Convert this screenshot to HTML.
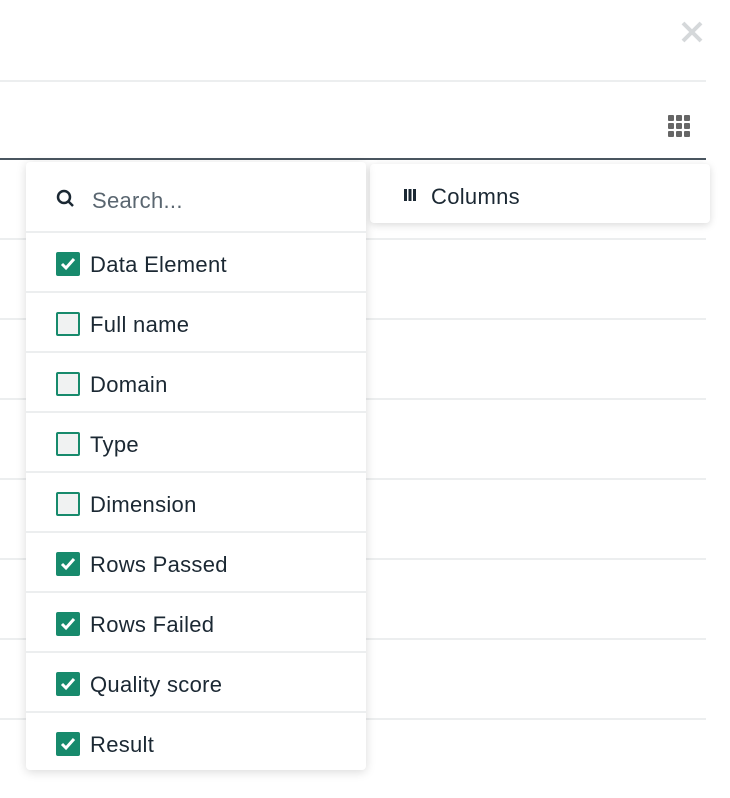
<!DOCTYPE html>
<html><head><style>
body{margin:0;width:730px;height:798px;background:#fff;font-family:"Liberation Sans",sans-serif;position:relative;overflow:hidden;color:#1b2833}
.l{position:absolute;left:0;width:706px;height:2px;background:#eceeef}
.menu{position:absolute;left:26px;top:162px;width:340px;height:608px;background:#fff;border-radius:4px;box-shadow:0 2px 10px rgba(0,0,0,.15)}
.row{height:58px;border-top:2px solid #eceeef;display:flex;align-items:center;padding-left:30px;font-size:22px;letter-spacing:0.3px}
.row .t{position:relative;top:3px}
.cb{width:24px;height:24px;box-sizing:border-box;border-radius:2px;margin-right:10px;display:flex;align-items:center;justify-content:center;position:relative;top:2px}
.on{background:#178a6c}
.off{border:2px solid #178a6c;background:#f0f2f2}
.cols{position:absolute;left:370px;top:164px;width:340px;height:59px;background:#fff;border-radius:4px;box-shadow:0 2px 8px rgba(0,0,0,.15);display:flex;align-items:center;font-size:22px;letter-spacing:0.3px}
</style></head><body>
<svg style="position:absolute;left:680px;top:20px" width="24" height="24"><path d="M3 3L21 21M21 3L3 21" stroke="#d5d8da" stroke-width="4"/></svg>
<div class="l" style="top:80px"></div>
<svg style="position:absolute;left:668px;top:115px" width="24" height="24" fill="#666">
<rect x="0" y="0" width="6" height="6" rx="1"/><rect x="8" y="0" width="6" height="6" rx="1"/><rect x="16" y="0" width="6" height="6" rx="1"/>
<rect x="0" y="8" width="6" height="6" rx="1"/><rect x="8" y="8" width="6" height="6" rx="1"/><rect x="16" y="8" width="6" height="6" rx="1"/>
<rect x="0" y="16" width="6" height="6" rx="1"/><rect x="8" y="16" width="6" height="6" rx="1"/><rect x="16" y="16" width="6" height="6" rx="1"/></svg>
<div class="l" style="top:158px;background:#4a5660"></div>
<div class="l" style="top:238px"></div><div class="l" style="top:318px"></div><div class="l" style="top:398px"></div><div class="l" style="top:478px"></div><div class="l" style="top:558px"></div><div class="l" style="top:638px"></div><div class="l" style="top:718px"></div>
<div class="cols"><span style="display:inline-block;width:33px"></span><svg width="14" height="14" style="margin-right:14px;position:relative;top:1px"><rect x="1" y="1" width="3" height="12" fill="#1b2833"/><rect x="5.5" y="1" width="3" height="12" fill="#1b2833"/><rect x="10" y="1" width="3" height="12" fill="#1b2833"/></svg><span style="position:relative;top:3px">Columns</span></div>
<div class="menu">
<div style="height:69px;display:flex;align-items:center;padding-left:30px;font-size:22px;letter-spacing:0.3px;color:#5a6670"><svg width="20" height="20" style="margin-right:16px;position:relative;top:2px"><circle cx="8" cy="8" r="6" fill="none" stroke="#1b2833" stroke-width="2.5"/><path d="M12 12L17 17" stroke="#1b2833" stroke-width="2.5"/></svg><span style="position:relative;top:4px">Search...</span></div>
<div class="row"><div class="cb on"><svg width="16" height="14"><path d="M2 7L6 11L14 2" stroke="#fff" stroke-width="3" fill="none"/></svg></div><span class="t">Data Element</span></div>
<div class="row"><div class="cb off"></div><span class="t">Full name</span></div>
<div class="row"><div class="cb off"></div><span class="t">Domain</span></div>
<div class="row"><div class="cb off"></div><span class="t">Type</span></div>
<div class="row"><div class="cb off"></div><span class="t">Dimension</span></div>
<div class="row"><div class="cb on"><svg width="16" height="14"><path d="M2 7L6 11L14 2" stroke="#fff" stroke-width="3" fill="none"/></svg></div><span class="t">Rows Passed</span></div>
<div class="row"><div class="cb on"><svg width="16" height="14"><path d="M2 7L6 11L14 2" stroke="#fff" stroke-width="3" fill="none"/></svg></div><span class="t">Rows Failed</span></div>
<div class="row"><div class="cb on"><svg width="16" height="14"><path d="M2 7L6 11L14 2" stroke="#fff" stroke-width="3" fill="none"/></svg></div><span class="t">Quality score</span></div>
<div class="row"><div class="cb on"><svg width="16" height="14"><path d="M2 7L6 11L14 2" stroke="#fff" stroke-width="3" fill="none"/></svg></div><span class="t">Result</span></div>
</div>
</body></html>
